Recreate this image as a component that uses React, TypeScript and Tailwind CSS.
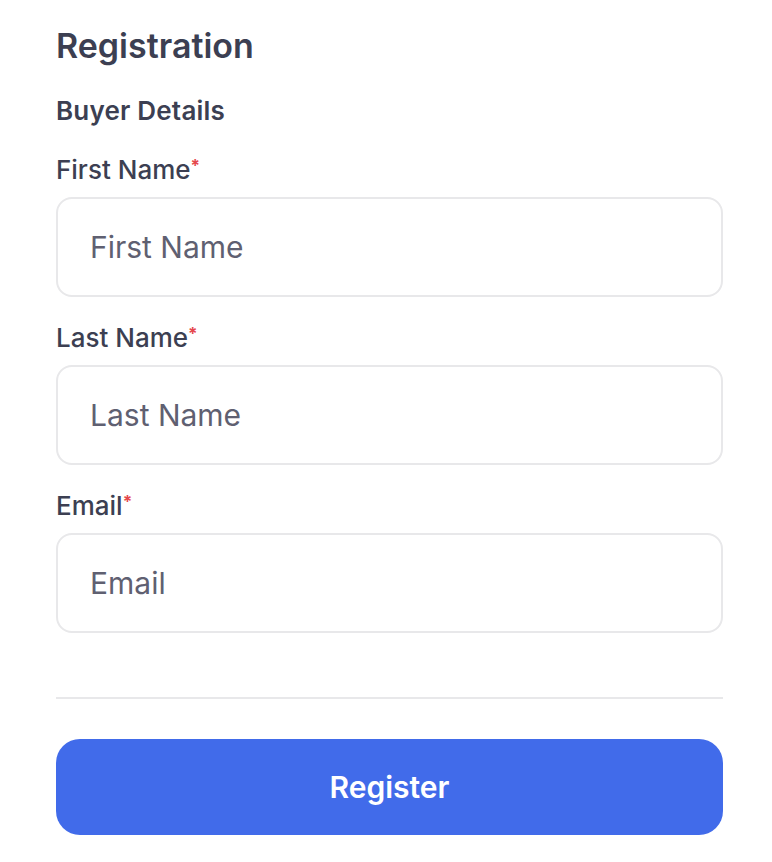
import React from 'react';

const fields = [
  { label: 'First Name', placeholder: 'First Name' },
  { label: 'Last Name', placeholder: 'Last Name' },
  { label: 'Email', placeholder: 'Email' },
];

export default function App() {
  return (
    <div className="min-h-screen bg-white pl-14 pr-[49px] pt-[26px] font-['Inter','Noto_Sans',sans-serif] text-[#3c3f52]">
      <h1 className="text-[34px] font-semibold leading-10">Registration</h1>
      <h2 className="mt-[29px] text-[26px] font-semibold leading-8 tracking-[0.2px]">Buyer Details</h2>

      <div className="mt-[27px] flex flex-col gap-[25px]">
        {fields.map((f) => (
          <div key={f.label} className="flex flex-col gap-[11px]">
            <label className="block h-8 text-[26px] font-medium leading-8">
              {f.label}
              <span className="relative -top-[7px] text-[17px] font-bold leading-none text-[#e5484d]">*</span>
            </label>
            <input
              type="text"
              placeholder={f.placeholder}
              className="h-[100px] w-full rounded-2xl border-2 border-[#e8e8ea] bg-white px-[32px] text-[30px] text-[#3c3f52] outline-none placeholder:text-[#5f6071]"
            />
          </div>
        ))}
      </div>

      <div className="mt-[64px] h-[2px] w-full bg-[#e8e8ea]" />

      <button className="mt-[40px] h-[96px] w-full rounded-3xl bg-[#416bea] text-[30px] font-semibold text-white">
        Register
      </button>
    </div>
  );
}
